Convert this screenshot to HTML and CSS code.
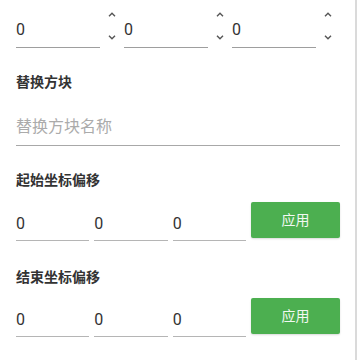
FILE: index.html
```html
<!DOCTYPE html>
<html>
<head>
<meta charset="utf-8">
<link rel="stylesheet" href="styles.css">
</head>
<body>
<div class="page">
  <div class="content">
    <div class="top-row">
      <div class="num-group">
        <div class="num-input">0</div>
        <div class="spinner">
          <svg width="8" height="5" viewBox="0 0 8 5"><path d="M1 4.2 L4 1.2 L7 4.2" fill="none" stroke="#555" stroke-width="1.4"/></svg>
          <svg width="8" height="5" viewBox="0 0 8 5"><path d="M1 0.8 L4 3.8 L7 0.8" fill="none" stroke="#555" stroke-width="1.4"/></svg>
        </div>
      </div>
      <div class="num-group">
        <div class="num-input">0</div>
        <div class="spinner">
          <svg width="8" height="5" viewBox="0 0 8 5"><path d="M1 4.2 L4 1.2 L7 4.2" fill="none" stroke="#555" stroke-width="1.4"/></svg>
          <svg width="8" height="5" viewBox="0 0 8 5"><path d="M1 0.8 L4 3.8 L7 0.8" fill="none" stroke="#555" stroke-width="1.4"/></svg>
        </div>
      </div>
      <div class="num-group">
        <div class="num-input">0</div>
        <div class="spinner">
          <svg width="8" height="5" viewBox="0 0 8 5"><path d="M1 4.2 L4 1.2 L7 4.2" fill="none" stroke="#555" stroke-width="1.4"/></svg>
          <svg width="8" height="5" viewBox="0 0 8 5"><path d="M1 0.8 L4 3.8 L7 0.8" fill="none" stroke="#555" stroke-width="1.4"/></svg>
        </div>
      </div>
    </div>

    <div class="label label-first">替换方块</div>
    <div class="text-input">替换方块名称</div>

    <div class="label label-second">起始坐标偏移</div>
    <div class="offset-row row-one">
      <div class="offset-input">0</div>
      <div class="offset-input">0</div>
      <div class="offset-input">0</div>
      <div class="apply-btn">应用</div>
    </div>

    <div class="label label-third">结束坐标偏移</div>
    <div class="offset-row row-two">
      <div class="offset-input">0</div>
      <div class="offset-input">0</div>
      <div class="offset-input">0</div>
      <div class="apply-btn">应用</div>
    </div>
  </div>
</div>
</body>
</html>
```

FILE: styles.css
```css
html, body {
  margin: 0;
  padding: 0;
  background: #ffffff;
}

body {
  font-family: Roboto, "Noto Sans CJK SC", sans-serif;
  color: #333333;
}

.page {
  width: 355px;
  height: 360px;
  border-right: 2px solid #dadada;
  overflow: hidden;
}

.content {
  padding: 0 15px 0 16px;
  width: 324px;
}

.top-row {
  display: flex;
}

.num-group {
  display: flex;
  width: 108px;
}

.num-input {
  width: 84px;
  padding: 20px 0 8px;
  line-height: 19px;
  font-size: 16px;
  color: #333;
  border-bottom: 1px solid #9e9e9e;
}

.spinner {
  width: 24px;
  height: 48px;
  display: flex;
  flex-direction: column;
  align-items: center;
  justify-content: space-between;
  padding: 12px 0 8px;
  box-sizing: border-box;
}

.label {
  font-size: 14px;
  line-height: 20px;
  font-weight: bold;
  color: #333;
}

.label-first {
  margin-top: 24px;
}

.label-second {
  margin-top: 24px;
}

.label-third {
  margin-top: 26px;
}

.text-input {
  margin-top: 16px;
  padding: 8px 0 7px;
  line-height: 22px;
  font-size: 16px;
  color: #ababab;
  border-bottom: 1px solid #a8a8a8;
}

.offset-row {
  display: flex;
  align-items: flex-start;
  gap: 5px;
}

.row-one {
  margin-top: 12px;
}

.row-two {
  margin-top: 11px;
}

.offset-input {
  flex: 1;
  padding: 12px 0 6px;
  line-height: 20px;
  font-size: 16px;
  color: #333;
  border-bottom: 1px solid #b5b5b5;
}

.apply-btn {
  width: 89px;
  height: 36px;
  background: #4caf50;
  color: #f2f8f2;
  font-size: 14px;
  line-height: 36px;
  text-align: center;
  border-radius: 2px;
  box-shadow: 0 1px 2px rgba(0,0,0,0.15);
}
```
